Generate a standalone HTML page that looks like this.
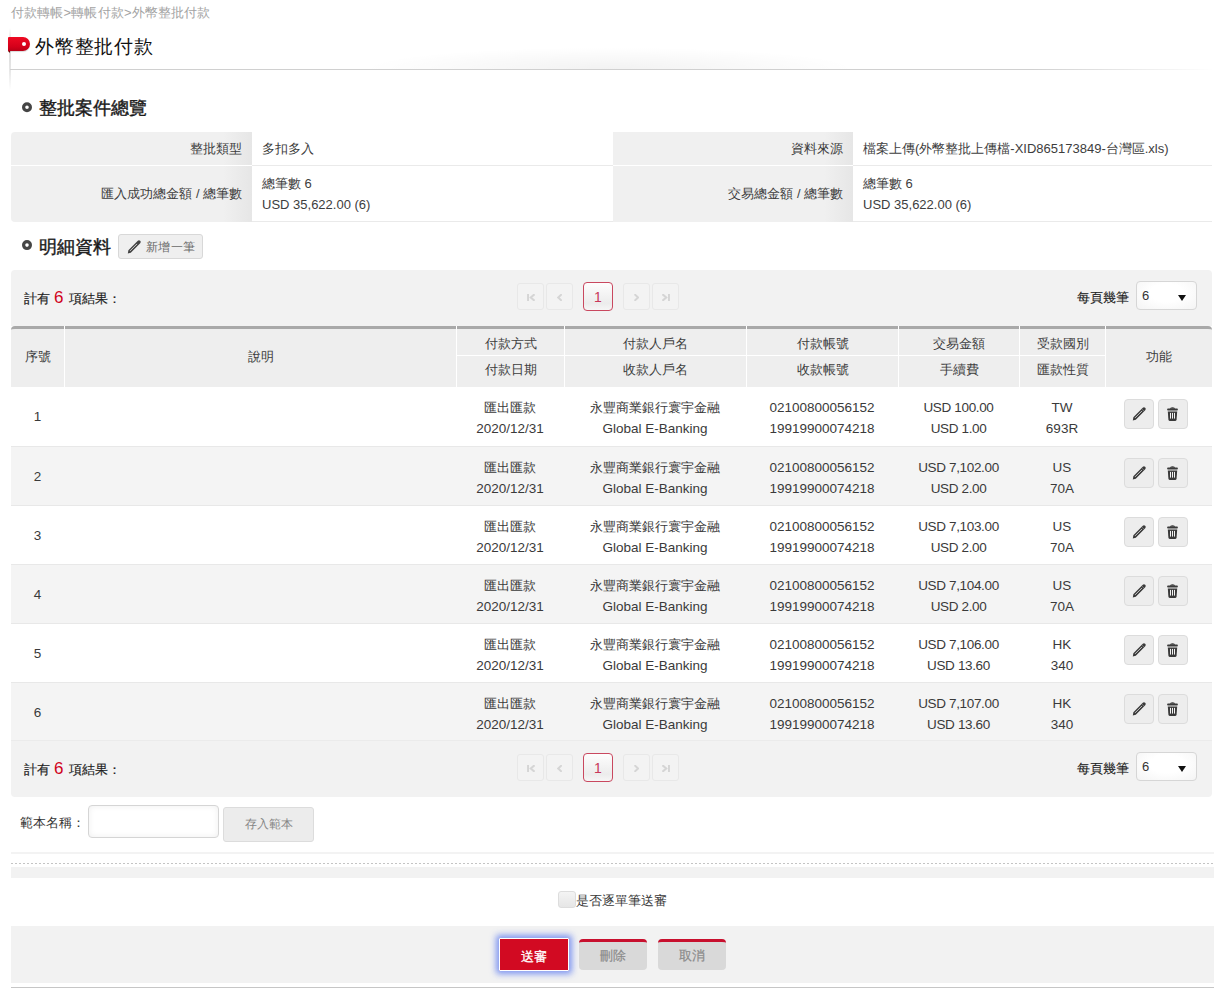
<!DOCTYPE html>
<html><head><meta charset="utf-8">
<style>
*{box-sizing:border-box;margin:0;padding:0}
html,body{width:1214px;height:989px;overflow:hidden;background:#fff}
body{font-family:"Liberation Sans",sans-serif;color:#333;font-size:13px;position:relative}
.abs{position:absolute}
.bc{left:11px;top:4px;font-size:13px;letter-spacing:0.15px;color:#a3a3a3;line-height:18px;white-space:nowrap}
.vline{left:9px;top:28px;width:2px;height:62px;background:linear-gradient(#fff,#d8d8d8 30%,#e8e8e8 70%,#fff)}
.hline{left:10px;top:69px;width:1204px;height:1px;background:linear-gradient(90deg,#d0d0d0,#d0d0d0 85%,#fff)}
.shade{left:360px;top:47px;width:500px;height:22px;background:radial-gradient(ellipse at 50% 100%,rgba(0,0,0,.05),rgba(0,0,0,0) 70%)}
.flag{left:8px;top:37px;width:22px;height:14px;background:linear-gradient(#ee0a22,#d4001a 70%,#b80016);border-radius:1px 7px 7px 0;box-shadow:0 1px 1px rgba(0,0,0,.15)}
.flag:before{content:"";position:absolute;left:0;top:14px;border-top:2px solid #700;border-left:2px solid transparent;width:0;height:0}
.flag:after{content:"";position:absolute;left:13.5px;top:4.5px;width:4.5px;height:4.5px;border-radius:50%;background:#fff}
.title{left:35px;top:35px;font-size:19px;letter-spacing:0.8px;color:#111;line-height:24px;white-space:nowrap}
.sec{font-size:17.5px;font-weight:400;-webkit-text-stroke:0.4px #1a1a1a;color:#1a1a1a;line-height:22px;white-space:nowrap}
.bul{width:10px;height:10px;border-radius:50%;border:3.5px solid #4a4a4a;background:#fff}
.ov{left:11px;top:132px;width:1201px;height:90px}
.lab{position:absolute;font-size:12.8px;color:#3d3d3d;background:linear-gradient(90deg,#f0f0f0 0,#f0f0f0 88%,#e6e6e6 100%);text-align:right;padding-right:10px}
.val{position:absolute;background:#fff;padding-left:10px;color:#3d3d3d;border-bottom:1px solid #eaeaea}
.btn-add{left:118px;top:234px;width:85px;height:25px;border:1px solid #d8d8d8;border-radius:3px;background:#efefef;color:#777;font-size:12px}
.bar{left:11px;width:1201px;height:56px;background:#f2f2f2}
.pg{position:absolute;top:13px;width:27px;height:27px;border:1px solid #e8e8e8;border-radius:3px;background:#f3f3f3;display:flex;align-items:center;justify-content:center}
.pg.cur{width:30px;height:29px;top:12px;border:1px solid #c9485f;border-radius:4px;background:linear-gradient(#fdfdfd,#ececec 75%,#f6f6f6);color:#c9385a;font-size:14px;line-height:27px;display:block;text-align:center;padding-top:1px}
.sel{position:absolute;width:61px;height:29px;border:1px solid #d6d6d6;border-radius:4px;background:radial-gradient(ellipse at 50% 40%,#fff 40%,#f4f4f4);font-size:13px;color:#333;padding-left:5px;line-height:27px}
.sel:after{content:"";position:absolute;right:10px;top:13px;border-left:4px solid transparent;border-right:4px solid transparent;border-top:6px solid #111}
table.grid{position:absolute;left:11px;top:387px;width:1201px;border-collapse:collapse;table-layout:fixed}
.grid tbody tr:first-child td{border-top:0}
.grid td{text-align:center;font-size:13.5px;color:#3a3a3a;height:59px;line-height:21px;padding:4px 0 0 0}
.c{font-size:13px}
.grid td:nth-child(6){letter-spacing:-0.35px}
.grid td:first-child{padding-top:1px}
.grid tbody tr:nth-child(even) td{background:#f4f4f4}
.grid tbody tr td{border-top:1px solid #e8e8e8}
.ib{width:30px;height:30px;border:1px solid #dcdcdc;border-radius:4px;background:#ededed}

.cnt{font-size:12.7px;color:#1e1e1e;-webkit-text-stroke:0.15px #1e1e1e;white-space:nowrap}
.red{color:#d0021b;font-size:17px;-webkit-text-stroke:0;margin:0 2px 0 1px}
.ppl{font-size:12.5px;color:#222;-webkit-text-stroke:0.1px #222;white-space:nowrap}
.tpl-l{font-size:12.5px;color:#333;white-space:nowrap}
.tpl-in{width:131px;height:33px;border:1px solid #d5d5d5;border-radius:4px;background:#fff;box-shadow:inset 0 0 6px rgba(0,0,0,.07)}
.tpl-btn{width:91px;height:35px;border:1px solid #dcdcdc;border-radius:3px;background:#ececec;color:#858585;font-size:12px;text-align:center;line-height:33px}
.chk{width:18px;height:17px;border:1px solid #ddd;border-radius:3px;background:linear-gradient(#f4f4f4,#e6e6e6)}
.bsub{width:70px;height:33px;background:#d20a22;color:#fff;font-size:12.5px;-webkit-text-stroke:0.3px #fff;text-align:center;line-height:37px;border:1px solid #fff;border-radius:1px;box-shadow:0 0 6px 3px rgba(90,120,240,.75)}
.bgr{width:68px;height:31px;background:#d9d9d9;color:#8a8a8a;font-size:13px;-webkit-text-stroke:0.2px #8a8a8a;text-align:center;line-height:27px;border-top:3px solid #c8102e;border-radius:4px}
.hd{left:11px;top:326px;width:1201px;height:61px;background:#eee;border-top:3px solid #a9a9a9;border-radius:4px 4px 0 0}
.ht{text-align:center;font-size:13px;color:#3d3d3d;white-space:nowrap}
</style></head><body>
<div class="abs bc">付款轉帳&gt;轉帳付款&gt;外幣整批付款</div>
<div class="abs shade"></div>
<div class="abs vline"></div>
<div class="abs hline"></div>
<div class="abs flag"></div>
<div class="abs title">外幣整批付款</div>

<svg class="abs" style="left:22px;top:102px" width="10" height="11" viewBox="0 0 10 11"><circle cx="5" cy="5.3" r="3.4" stroke="#454545" stroke-width="3.2" fill="#fff"/></svg>
<div class="abs sec" style="left:39px;top:97px">整批案件總覽</div>

<div class="abs ov">
  <div class="lab" style="left:0;top:0;width:241px;height:34px;line-height:34px;border-bottom:1px solid #fff;border-top-left-radius:4px">整批類型</div>
  <div class="val" style="left:241px;top:0;width:361px;height:34px;line-height:34px">多扣多入</div>
  <div class="lab" style="left:0;top:34px;width:241px;height:56px;line-height:56px;border-bottom-left-radius:4px">匯入成功總金額 / 總筆數</div>
  <div class="val" style="left:241px;top:34px;width:361px;height:56px;padding-top:7px;line-height:21px">總筆數 6<br>USD 35,622.00 (6)</div>
  <div class="lab" style="left:602px;top:0;width:240px;height:34px;line-height:34px;border-bottom:1px solid #fff">資料來源</div>
  <div class="val" style="left:842px;top:0;width:359px;height:34px;line-height:34px">檔案上傳(外幣整批上傳檔-XID865173849-台灣區.xls)</div>
  <div class="lab" style="left:602px;top:34px;width:240px;height:56px;line-height:56px">交易總金額 / 總筆數</div>
  <div class="val" style="left:842px;top:34px;width:359px;height:56px;padding-top:7px;line-height:21px">總筆數 6<br>USD 35,622.00 (6)</div>
</div>

<svg class="abs" style="left:22px;top:240px" width="10" height="11" viewBox="0 0 10 11"><circle cx="5" cy="5.1" r="3.4" stroke="#454545" stroke-width="3.2" fill="#fff"/></svg>
<div class="abs sec" style="left:39px;top:236px">明細資料</div>
<div class="abs btn-add"><svg width="15" height="15" viewBox="0 0 15 15" style="position:absolute;left:8px;top:5px"><path d="M0.8 13.6 L1.37 10.23 L10.8 0.8 A1.7 1.7 0 0 1 13.2 3.2 L3.77 12.63 Z" fill="#444"/><path d="M3.0 10.9 L10.0 3.9" stroke="#e0e0e0" stroke-width="0.9"/></svg><span style="position:absolute;left:27px;top:1px;line-height:23px;font-size:11.5px;letter-spacing:0.35px;color:#6a6a6a">新增一筆</span></div>

<div class="abs bar" style="top:270px;border-radius:4px 4px 0 0">
  <div class="abs cnt" style="left:12.5px;top:0;line-height:56px">計有 <span class="red">6</span> 項結果：</div>
  <div class="pg" style="left:506px"><svg width="8" height="7" viewBox="0 0 9 8" style="margin-top:1px"><rect x="0" y="0" width="2.2" height="8" fill="#d5d5d5"/><path d="M8.6 0.2 L4.2 4 L8.6 7.8" stroke="#d5d5d5" stroke-width="2.3" fill="none"/></svg></div>
  <div class="pg" style="left:535px"><svg width="5.3" height="7" viewBox="0 0 6 8" style="margin-top:1px"><path d="M5.4 0.2 L1.4 4 L5.4 7.8" stroke="#d5d5d5" stroke-width="2.2" fill="none"/></svg></div>
  <div class="pg cur" style="left:572px">1</div>
  <div class="pg" style="left:612px"><svg width="5.3" height="7" viewBox="0 0 6 8" style="margin-top:1px"><path d="M0.6 0.2 L4.6 4 L0.6 7.8" stroke="#d5d5d5" stroke-width="2.2" fill="none"/></svg></div>
  <div class="pg" style="left:641px"><svg width="8" height="7" viewBox="0 0 9 8" style="margin-top:1px"><rect x="6.8" y="0" width="2.2" height="8" fill="#d5d5d5"/><path d="M0.4 0.2 L4.8 4 L0.4 7.8" stroke="#d5d5d5" stroke-width="2.3" fill="none"/></svg></div>
  <div class="abs ppl" style="left:1066px;top:0;line-height:56px">每頁幾筆</div>
  <div class="sel" style="left:1125px;top:11px">6</div>
</div>
<div class="abs bar" style="top:741px;border-radius:0 0 4px 4px">
  <div class="abs cnt" style="left:12.5px;top:0;line-height:56px">計有 <span class="red">6</span> 項結果：</div>
  <div class="pg" style="left:506px"><svg width="8" height="7" viewBox="0 0 9 8" style="margin-top:1px"><rect x="0" y="0" width="2.2" height="8" fill="#d5d5d5"/><path d="M8.6 0.2 L4.2 4 L8.6 7.8" stroke="#d5d5d5" stroke-width="2.3" fill="none"/></svg></div>
  <div class="pg" style="left:535px"><svg width="5.3" height="7" viewBox="0 0 6 8" style="margin-top:1px"><path d="M5.4 0.2 L1.4 4 L5.4 7.8" stroke="#d5d5d5" stroke-width="2.2" fill="none"/></svg></div>
  <div class="pg cur" style="left:572px">1</div>
  <div class="pg" style="left:612px"><svg width="5.3" height="7" viewBox="0 0 6 8" style="margin-top:1px"><path d="M0.6 0.2 L4.6 4 L0.6 7.8" stroke="#d5d5d5" stroke-width="2.2" fill="none"/></svg></div>
  <div class="pg" style="left:641px"><svg width="8" height="7" viewBox="0 0 9 8" style="margin-top:1px"><rect x="6.8" y="0" width="2.2" height="8" fill="#d5d5d5"/><path d="M0.4 0.2 L4.8 4 L0.4 7.8" stroke="#d5d5d5" stroke-width="2.3" fill="none"/></svg></div>
  <div class="abs ppl" style="left:1066px;top:0;line-height:56px">每頁幾筆</div>
  <div class="sel" style="left:1125px;top:11px">6</div>
</div>

<div class="abs hd"><div class="abs" style="left:53px;top:-3px;width:1px;height:61px;background:#fff"></div><div class="abs" style="left:445px;top:-3px;width:1px;height:61px;background:#fff"></div><div class="abs" style="left:553px;top:-3px;width:1px;height:61px;background:#fff"></div><div class="abs" style="left:735px;top:-3px;width:1px;height:61px;background:#fff"></div><div class="abs" style="left:887px;top:-3px;width:1px;height:61px;background:#fff"></div><div class="abs" style="left:1008px;top:-3px;width:1px;height:61px;background:#fff"></div><div class="abs" style="left:1094px;top:-3px;width:1px;height:61px;background:#fff"></div><div class="abs" style="left:445px;top:26px;width:649px;height:1px;background:#fff"></div><div class="abs ht" style="left:0px;top:0px;width:53px;height:56px;line-height:56px">序號</div><div class="abs ht" style="left:54px;top:0px;width:391px;height:56px;line-height:56px">說明</div><div class="abs ht" style="left:1095px;top:0px;width:106px;height:56px;line-height:56px">功能</div><div class="abs ht" style="left:446px;top:2px;width:107px;height:26px;line-height:26px">付款方式</div><div class="abs ht" style="left:446px;top:27px;width:107px;height:27px;line-height:27px">付款日期</div><div class="abs ht" style="left:554px;top:2px;width:181px;height:26px;line-height:26px">付款人戶名</div><div class="abs ht" style="left:554px;top:27px;width:181px;height:27px;line-height:27px">收款人戶名</div><div class="abs ht" style="left:736px;top:2px;width:151px;height:26px;line-height:26px">付款帳號</div><div class="abs ht" style="left:736px;top:27px;width:151px;height:27px;line-height:27px">收款帳號</div><div class="abs ht" style="left:888px;top:2px;width:120px;height:26px;line-height:26px">交易金額</div><div class="abs ht" style="left:888px;top:27px;width:120px;height:27px;line-height:27px">手續費</div><div class="abs ht" style="left:1009px;top:2px;width:85px;height:26px;line-height:26px">受款國別</div><div class="abs ht" style="left:1009px;top:27px;width:85px;height:27px;line-height:27px">匯款性質</div></div>
<table class="grid">
<colgroup><col style="width:53px"><col style="width:392px"><col style="width:108px"><col style="width:182px"><col style="width:152px"><col style="width:121px"><col style="width:86px"><col style="width:107px"></colgroup>

<tbody>
<tr><td>1</td><td></td><td><span class="c">匯出匯款</span><br>2020/12/31</td><td><span class="c">永豐商業銀行寰宇金融</span><br>Global E-Banking</td><td>02100800056152<br>19919900074218</td><td>USD 100.00<br>USD 1.00</td><td>TW<br>693R</td><td></td></tr>
<tr><td>2</td><td></td><td><span class="c">匯出匯款</span><br>2020/12/31</td><td><span class="c">永豐商業銀行寰宇金融</span><br>Global E-Banking</td><td>02100800056152<br>19919900074218</td><td>USD 7,102.00<br>USD 2.00</td><td>US<br>70A</td><td></td></tr>
<tr><td>3</td><td></td><td><span class="c">匯出匯款</span><br>2020/12/31</td><td><span class="c">永豐商業銀行寰宇金融</span><br>Global E-Banking</td><td>02100800056152<br>19919900074218</td><td>USD 7,103.00<br>USD 2.00</td><td>US<br>70A</td><td></td></tr>
<tr><td>4</td><td></td><td><span class="c">匯出匯款</span><br>2020/12/31</td><td><span class="c">永豐商業銀行寰宇金融</span><br>Global E-Banking</td><td>02100800056152<br>19919900074218</td><td>USD 7,104.00<br>USD 2.00</td><td>US<br>70A</td><td></td></tr>
<tr><td>5</td><td></td><td><span class="c">匯出匯款</span><br>2020/12/31</td><td><span class="c">永豐商業銀行寰宇金融</span><br>Global E-Banking</td><td>02100800056152<br>19919900074218</td><td>USD 7,106.00<br>USD 13.60</td><td>HK<br>340</td><td></td></tr>
<tr><td>6</td><td></td><td><span class="c">匯出匯款</span><br>2020/12/31</td><td><span class="c">永豐商業銀行寰宇金融</span><br>Global E-Banking</td><td>02100800056152<br>19919900074218</td><td>USD 7,107.00<br>USD 13.60</td><td>HK<br>340</td><td></td></tr>
</tbody></table>

<div class="abs" style="left:11px;top:740px;width:1201px;height:1px;background:#ebebeb"></div>
<div class="abs tpl-l" style="left:20px;top:813px;line-height:20px">範本名稱：</div>
<div class="abs tpl-in" style="left:88px;top:805px"></div>
<div class="abs tpl-btn" style="left:223px;top:807px">存入範本</div>
<div class="abs" style="left:11px;top:852px;width:1203px;height:2px;background:#f3f3f3"></div>
<div class="abs" style="left:11px;top:863px;width:1203px;height:1px;background:repeating-linear-gradient(90deg,#c4c4c4 0 2px,transparent 2px 4px)"></div>
<div class="abs" style="left:11px;top:867px;width:1203px;height:11px;background:#f2f2f2"></div>
<div class="abs chk" style="left:558px;top:891px"></div>
<div class="abs" style="left:576px;top:891px;line-height:20px;font-size:12.7px;color:#3a3a3a">是否逐單筆送審</div>
<div class="abs" style="left:11px;top:926px;width:1203px;height:57px;background:#f2f2f2"></div>
<div class="abs" style="left:11px;top:987px;width:1203px;height:1px;background:#c6c6c6"></div>
<div class="abs bsub" style="left:499px;top:938px">送審</div>
<div class="abs bgr" style="left:579px;top:939px">刪除</div>
<div class="abs bgr" style="left:658px;top:939px">取消</div>
<div class="abs ib" style="left:1124px;top:399px"><svg width="15" height="15" viewBox="0 0 15 15" style="position:absolute;left:7px;top:7px"><path d="M0.8 13.6 L1.37 10.23 L10.8 0.8 A1.7 1.7 0 0 1 13.2 3.2 L3.77 12.63 Z" fill="#3a3a3a"/><path d="M3.0 10.9 L10.0 3.9" stroke="#d9d9d9" stroke-width="0.9"/><path d="M9.9 2.0 L12.0 4.1" stroke="#9a9a9a" stroke-width="0.6"/></svg></div><div class="abs ib" style="left:1158px;top:399px"><svg width="12" height="15" viewBox="0 0 12 15" style="position:absolute;left:8px;top:7px"><path d="M3.1 1.0 Q5.5 -0.3 7.9 1.0 L8.1 1.8 H2.9 Z" fill="#3a3a3a"/><rect x="0.1" y="1.6" width="10.8" height="1.9" rx="0.9" fill="#3a3a3a"/><path d="M0.8 4.6 H10.2 L9.6 12.6 Q9.5 13.9 8.3 13.9 H2.7 Q1.5 13.9 1.4 12.6 Z" fill="#3a3a3a"/><path d="M3.5 5.9 V11.6 M5.5 5.9 V11.6 M7.5 5.9 V11.6" stroke="#f4f4f4" stroke-width="1"/></svg></div>
<div class="abs ib" style="left:1124px;top:458px"><svg width="15" height="15" viewBox="0 0 15 15" style="position:absolute;left:7px;top:7px"><path d="M0.8 13.6 L1.37 10.23 L10.8 0.8 A1.7 1.7 0 0 1 13.2 3.2 L3.77 12.63 Z" fill="#3a3a3a"/><path d="M3.0 10.9 L10.0 3.9" stroke="#d9d9d9" stroke-width="0.9"/><path d="M9.9 2.0 L12.0 4.1" stroke="#9a9a9a" stroke-width="0.6"/></svg></div><div class="abs ib" style="left:1158px;top:458px"><svg width="12" height="15" viewBox="0 0 12 15" style="position:absolute;left:8px;top:7px"><path d="M3.1 1.0 Q5.5 -0.3 7.9 1.0 L8.1 1.8 H2.9 Z" fill="#3a3a3a"/><rect x="0.1" y="1.6" width="10.8" height="1.9" rx="0.9" fill="#3a3a3a"/><path d="M0.8 4.6 H10.2 L9.6 12.6 Q9.5 13.9 8.3 13.9 H2.7 Q1.5 13.9 1.4 12.6 Z" fill="#3a3a3a"/><path d="M3.5 5.9 V11.6 M5.5 5.9 V11.6 M7.5 5.9 V11.6" stroke="#f4f4f4" stroke-width="1"/></svg></div>
<div class="abs ib" style="left:1124px;top:517px"><svg width="15" height="15" viewBox="0 0 15 15" style="position:absolute;left:7px;top:7px"><path d="M0.8 13.6 L1.37 10.23 L10.8 0.8 A1.7 1.7 0 0 1 13.2 3.2 L3.77 12.63 Z" fill="#3a3a3a"/><path d="M3.0 10.9 L10.0 3.9" stroke="#d9d9d9" stroke-width="0.9"/><path d="M9.9 2.0 L12.0 4.1" stroke="#9a9a9a" stroke-width="0.6"/></svg></div><div class="abs ib" style="left:1158px;top:517px"><svg width="12" height="15" viewBox="0 0 12 15" style="position:absolute;left:8px;top:7px"><path d="M3.1 1.0 Q5.5 -0.3 7.9 1.0 L8.1 1.8 H2.9 Z" fill="#3a3a3a"/><rect x="0.1" y="1.6" width="10.8" height="1.9" rx="0.9" fill="#3a3a3a"/><path d="M0.8 4.6 H10.2 L9.6 12.6 Q9.5 13.9 8.3 13.9 H2.7 Q1.5 13.9 1.4 12.6 Z" fill="#3a3a3a"/><path d="M3.5 5.9 V11.6 M5.5 5.9 V11.6 M7.5 5.9 V11.6" stroke="#f4f4f4" stroke-width="1"/></svg></div>
<div class="abs ib" style="left:1124px;top:576px"><svg width="15" height="15" viewBox="0 0 15 15" style="position:absolute;left:7px;top:7px"><path d="M0.8 13.6 L1.37 10.23 L10.8 0.8 A1.7 1.7 0 0 1 13.2 3.2 L3.77 12.63 Z" fill="#3a3a3a"/><path d="M3.0 10.9 L10.0 3.9" stroke="#d9d9d9" stroke-width="0.9"/><path d="M9.9 2.0 L12.0 4.1" stroke="#9a9a9a" stroke-width="0.6"/></svg></div><div class="abs ib" style="left:1158px;top:576px"><svg width="12" height="15" viewBox="0 0 12 15" style="position:absolute;left:8px;top:7px"><path d="M3.1 1.0 Q5.5 -0.3 7.9 1.0 L8.1 1.8 H2.9 Z" fill="#3a3a3a"/><rect x="0.1" y="1.6" width="10.8" height="1.9" rx="0.9" fill="#3a3a3a"/><path d="M0.8 4.6 H10.2 L9.6 12.6 Q9.5 13.9 8.3 13.9 H2.7 Q1.5 13.9 1.4 12.6 Z" fill="#3a3a3a"/><path d="M3.5 5.9 V11.6 M5.5 5.9 V11.6 M7.5 5.9 V11.6" stroke="#f4f4f4" stroke-width="1"/></svg></div>
<div class="abs ib" style="left:1124px;top:635px"><svg width="15" height="15" viewBox="0 0 15 15" style="position:absolute;left:7px;top:7px"><path d="M0.8 13.6 L1.37 10.23 L10.8 0.8 A1.7 1.7 0 0 1 13.2 3.2 L3.77 12.63 Z" fill="#3a3a3a"/><path d="M3.0 10.9 L10.0 3.9" stroke="#d9d9d9" stroke-width="0.9"/><path d="M9.9 2.0 L12.0 4.1" stroke="#9a9a9a" stroke-width="0.6"/></svg></div><div class="abs ib" style="left:1158px;top:635px"><svg width="12" height="15" viewBox="0 0 12 15" style="position:absolute;left:8px;top:7px"><path d="M3.1 1.0 Q5.5 -0.3 7.9 1.0 L8.1 1.8 H2.9 Z" fill="#3a3a3a"/><rect x="0.1" y="1.6" width="10.8" height="1.9" rx="0.9" fill="#3a3a3a"/><path d="M0.8 4.6 H10.2 L9.6 12.6 Q9.5 13.9 8.3 13.9 H2.7 Q1.5 13.9 1.4 12.6 Z" fill="#3a3a3a"/><path d="M3.5 5.9 V11.6 M5.5 5.9 V11.6 M7.5 5.9 V11.6" stroke="#f4f4f4" stroke-width="1"/></svg></div>
<div class="abs ib" style="left:1124px;top:694px"><svg width="15" height="15" viewBox="0 0 15 15" style="position:absolute;left:7px;top:7px"><path d="M0.8 13.6 L1.37 10.23 L10.8 0.8 A1.7 1.7 0 0 1 13.2 3.2 L3.77 12.63 Z" fill="#3a3a3a"/><path d="M3.0 10.9 L10.0 3.9" stroke="#d9d9d9" stroke-width="0.9"/><path d="M9.9 2.0 L12.0 4.1" stroke="#9a9a9a" stroke-width="0.6"/></svg></div><div class="abs ib" style="left:1158px;top:694px"><svg width="12" height="15" viewBox="0 0 12 15" style="position:absolute;left:8px;top:7px"><path d="M3.1 1.0 Q5.5 -0.3 7.9 1.0 L8.1 1.8 H2.9 Z" fill="#3a3a3a"/><rect x="0.1" y="1.6" width="10.8" height="1.9" rx="0.9" fill="#3a3a3a"/><path d="M0.8 4.6 H10.2 L9.6 12.6 Q9.5 13.9 8.3 13.9 H2.7 Q1.5 13.9 1.4 12.6 Z" fill="#3a3a3a"/><path d="M3.5 5.9 V11.6 M5.5 5.9 V11.6 M7.5 5.9 V11.6" stroke="#f4f4f4" stroke-width="1"/></svg></div>
</body></html>
